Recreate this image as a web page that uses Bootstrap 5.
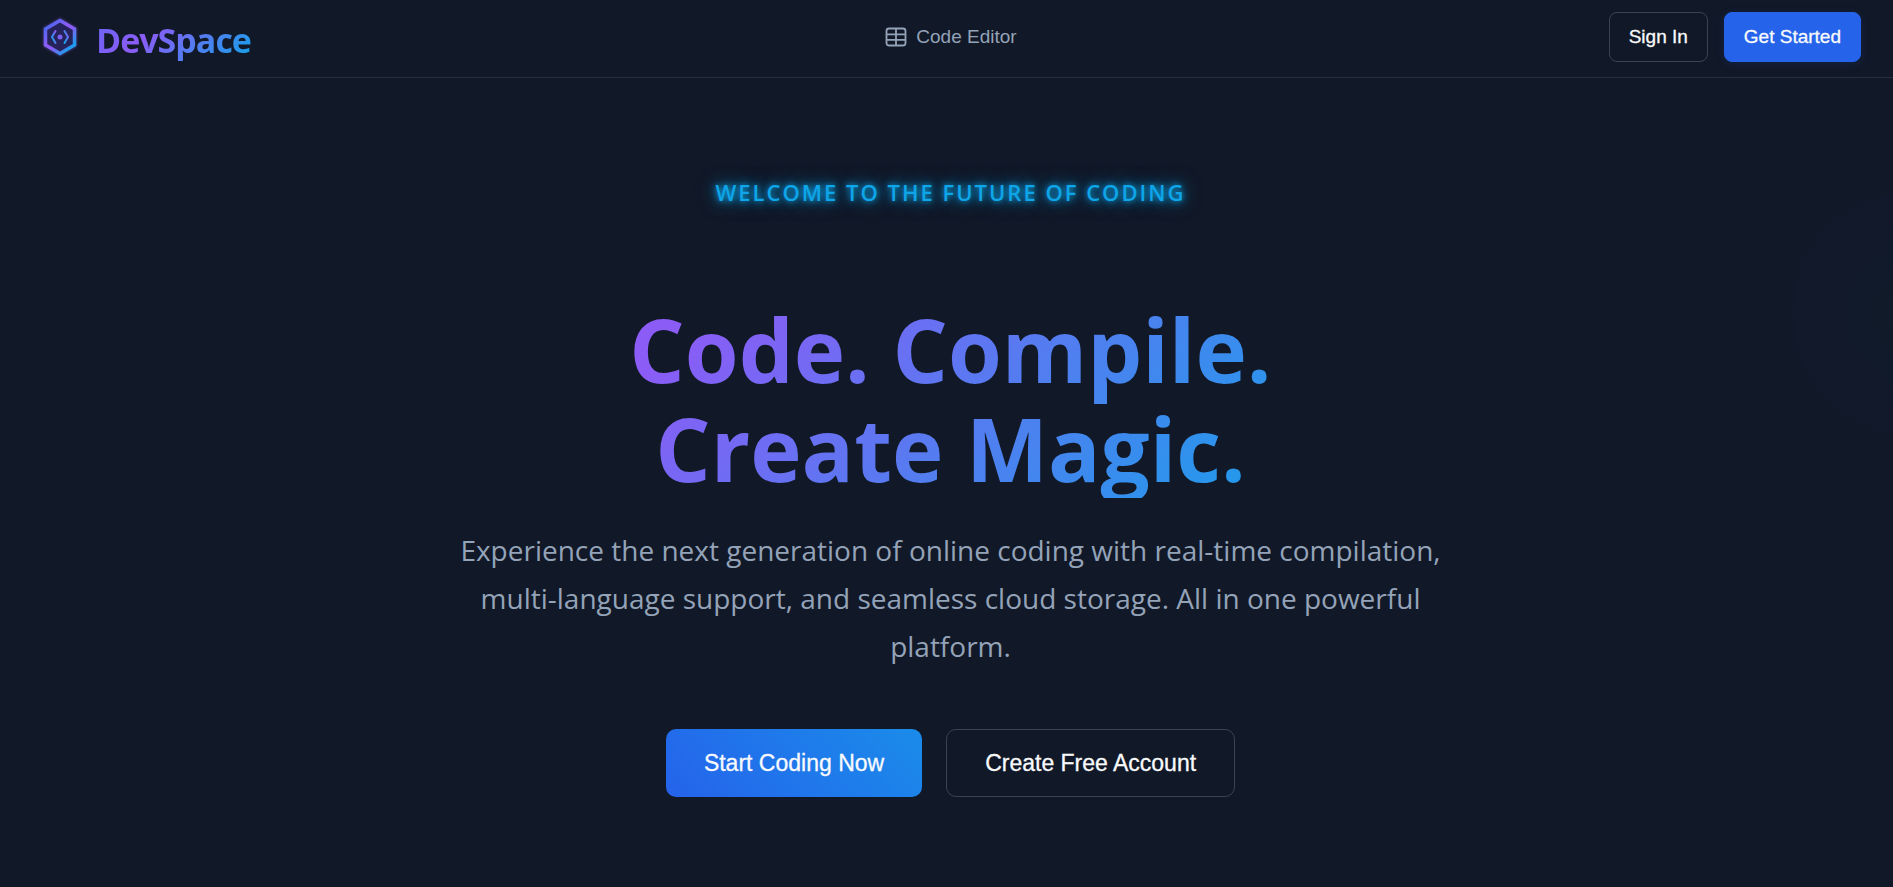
<!DOCTYPE html>
<html lang="en">
<head>
<meta charset="utf-8">
<meta name="viewport" content="width=device-width, initial-scale=1">
<title>DevSpace</title>
<link href="https://cdn.jsdelivr.net/npm/bootstrap@5.3.0/dist/css/bootstrap.min.css" rel="stylesheet">
<style>
  body {
    background: #111827;
    color: #f8fafc;
    font-family: "Open Sans", "Noto Sans", sans-serif;
    min-height: 100vh;
    overflow-x: hidden;
  }
  .site-header {
    border-bottom: 1px solid #272f3f;
    padding: 12px 32px 15px 40px;
  }
  .side { flex: 1 1 0; }
  .brand-mark { width: 40px; height: 50px; }
  .brand-name, .hero-title {
    background: linear-gradient(135deg, #6366f1 0%, #8b5cf6 35%, #0ea5e9 100%);
    -webkit-background-clip: text;
    background-clip: text;
    color: transparent;
    font-weight: 700;
  }
  .brand-name { font-size: 34px; line-height: 50px; letter-spacing: -1px; padding-top: 3px; margin-bottom: -3px; }
  .top-link, .btn { font-family: "Liberation Sans", Arial, sans-serif; }
  .top-link { color: #94a3b8; font-size: 19px; line-height: 28px; }
  .btn-top { font-size: 19px; line-height: 28px; padding: 10px 19px; border-radius: 8px; color: #f8fafc; -webkit-text-stroke: .3px; }
  .btn-fill, .btn-fill:hover { background: #2563eb; border-color: #2563eb; color: #f8fafc; box-shadow: 0 2px 10px #2563eb26; }
  .btn-line, .btn-line:hover { border-color: #3b4252; color: #f8fafc; }
  .hero { padding: 96px 0 88px 8px; }
  .hero-glow {
    width: 240px; height: 240px; top: 115px; right: -140px;
    background: radial-gradient(circle, #111b29 0%, #11192a 60%, #11182a 85%, #111827 100%);
    border-radius: 50%;
  }
  .eyebrow {
    color: #0ea5e9; font-size: 22px; line-height: 36px; font-weight: 600; letter-spacing: 2px;
    text-shadow: 0 0 5px #0ea5e980, 0 0 10px #0ea5e9, 0 0 20px #0ea5e9b3;
    margin-bottom: 90px;
  }
  .hero-title {
    background-image: linear-gradient(135deg, #8b5cf6 22%, #0ea5e9 94%);
    font-size: 87px; line-height: 99px; width: 100%; max-width: 1000px; margin-bottom: 28px;
  }
  .hero-text { color: #94a3b8; font-size: 28px; line-height: 48px; max-width: 1000px; margin-bottom: 59px; }
  .btn-hero { font-size: 23px; line-height: 32px; padding: 17px 38px; border-radius: 10px; color: #f8fafc; -webkit-text-stroke: .3px; }
  .btn-grad, .btn-grad:hover { background: linear-gradient(45deg, #2563eb, #1a8cea); border: 0; padding: 18px 38px; color: #f8fafc; }
</style>
</head>
<body>
<header class="site-header d-flex align-items-center">
  <div class="side d-flex">
    <a href="#" class="d-flex align-items-center gap-3 text-decoration-none">
      <svg class="brand-mark" viewBox="0 0 40 50" aria-hidden="true">
        <defs>
          <linearGradient id="edge" x1="0" y1="1" x2="1" y2="0">
            <stop offset="0" stop-color="#0ea5e9"/><stop offset="1" stop-color="#8b5cf6"/>
          </linearGradient>
          <linearGradient id="rim" gradientUnits="userSpaceOnUse" x1="5" y1="10" x2="35" y2="40">
            <stop offset="0" stop-color="#3b6af0"/><stop offset=".4" stop-color="#8b5cf6"/><stop offset=".55" stop-color="#8b5cf6"/><stop offset=".85" stop-color="#1f9aec"/>
          </linearGradient>
          <filter id="halo" x="-30%" y="-30%" width="160%" height="160%"><feGaussianBlur stdDeviation="1.5"/></filter>
        </defs>
        <path d="M20 8.500 34.500 17V33L20 41.500 5.500 33V17Z" fill="none" stroke="#8b5cf6" stroke-width="4" opacity=".5" filter="url(#halo)"/>
        <path d="M20 8.500 34.500 17V33L20 41.500 5.500 33V17Z" fill="#25235a" stroke="url(#rim)" stroke-width="3.500"/>
        <path d="M15.500 19 12 25l3.500 6" fill="none" stroke="url(#edge)" stroke-width="2" stroke-linecap="round" stroke-linejoin="round"/>
        <path d="M24.500 19 28 25l-3.500 6" fill="none" stroke="url(#edge)" stroke-width="2" stroke-linecap="round" stroke-linejoin="round"/>
        <circle cx="20" cy="25" r="2.500" fill="#7c62f4"/>
      </svg>
      <span class="brand-name">DevSpace</span>
    </a>
  </div>
  <nav>
    <a href="#" class="top-link d-flex align-items-center text-decoration-none gap-2">
      <svg width="24" height="24" viewBox="0 0 24 24" fill="none" stroke="currentColor" stroke-width="1.800" aria-hidden="true"><rect x="2.500" y="3.500" width="19" height="17" rx="2.500"/><path d="M12 3.500v17M2.500 9.300h19M2.500 14.800h19"/></svg>
      Code Editor
    </a>
  </nav>
  <div class="side d-flex justify-content-end gap-3">
    <button type="button" class="btn btn-top btn-line">Sign In</button>
    <button type="button" class="btn btn-top btn-fill">Get Started</button>
  </div>
</header>
<main class="hero position-relative overflow-hidden d-flex flex-column align-items-center text-center">
  <div class="hero-glow position-absolute" aria-hidden="true"></div>
  <p class="eyebrow text-uppercase">Welcome to the future of coding</p>
  <h1 class="hero-title">Code. Compile.<br>Create Magic.</h1>
  <p class="hero-text">Experience the next generation of online coding with real-time compilation, multi-language support, and seamless cloud storage. All in one powerful platform.</p>
  <div class="d-flex flex-wrap justify-content-center gap-4">
    <button type="button" class="btn btn-hero btn-grad">Start Coding Now</button>
    <button type="button" class="btn btn-hero btn-line">Create Free Account</button>
  </div>
</main>
<script src="https://cdn.jsdelivr.net/npm/bootstrap@5.3.0/dist/js/bootstrap.bundle.min.js"></script>
</body>
</html>
